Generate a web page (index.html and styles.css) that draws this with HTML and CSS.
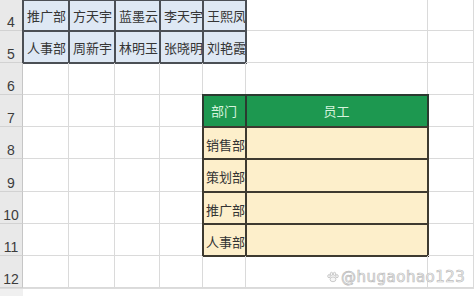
FILE: index.html
```html
<!DOCTYPE html>
<html lang="zh">
<head>
<meta charset="utf-8">
<title>Sheet</title>
<link rel="stylesheet" href="styles.css">
</head>
<body>
<div class="sheet">
  <div class="rh">4</div>
  <div class="c blue">推广部</div><div class="c blue">方天宇</div><div class="c blue">蓝墨云</div><div class="c blue">李天宇</div><div class="c blue">王熙凤</div>
  <div class="c"></div><div class="c"></div>

  <div class="rh">5</div>
  <div class="c blue">人事部</div><div class="c blue">周新宇</div><div class="c blue">林明玉</div><div class="c blue">张晓明</div><div class="c blue">刘艳霞</div>
  <div class="c"></div><div class="c"></div>

  <div class="rh">6</div>
  <div class="c"></div><div class="c"></div><div class="c"></div><div class="c"></div><div class="c"></div><div class="c"></div><div class="c"></div>

  <div class="rh">7</div>
  <div class="c"></div><div class="c"></div><div class="c"></div><div class="c"></div>
  <div class="c gh">部门</div><div class="c gh">员工</div>
  <div class="c"></div>

  <div class="rh">8</div>
  <div class="c"></div><div class="c"></div><div class="c"></div><div class="c"></div>
  <div class="c cream">销售部</div><div class="c cream"></div>
  <div class="c"></div>

  <div class="rh">9</div>
  <div class="c"></div><div class="c"></div><div class="c"></div><div class="c"></div>
  <div class="c cream">策划部</div><div class="c cream"></div>
  <div class="c"></div>

  <div class="rh">10</div>
  <div class="c"></div><div class="c"></div><div class="c"></div><div class="c"></div>
  <div class="c cream">推广部</div><div class="c cream"></div>
  <div class="c"></div>

  <div class="rh">11</div>
  <div class="c"></div><div class="c"></div><div class="c"></div><div class="c"></div>
  <div class="c cream">人事部</div><div class="c cream"></div>
  <div class="c"></div>

  <div class="rh">12</div>
  <div class="c"></div><div class="c"></div><div class="c"></div><div class="c"></div><div class="c"></div><div class="c"></div><div class="c"></div>

  <div class="rh tail"></div>
  <div class="c tail"></div><div class="c tail"></div><div class="c tail"></div><div class="c tail"></div><div class="c tail"></div><div class="c tail"></div><div class="c tail"></div>

  <div class="mark">
    <svg class="paw" width="12" height="12" viewBox="0 0 13 13" aria-hidden="true">
      <g fill="#f6f6f6" stroke="#c0c0c0" stroke-width="0.9">
        <ellipse cx="6.5" cy="9" rx="3.2" ry="2.6"/>
        <ellipse cx="2.2" cy="5.6" rx="1.4" ry="1.7"/>
        <ellipse cx="4.9" cy="3.2" rx="1.4" ry="1.8"/>
        <ellipse cx="8.1" cy="3.2" rx="1.4" ry="1.8"/>
        <ellipse cx="10.8" cy="5.6" rx="1.4" ry="1.7"/>
      </g>
    </svg>
    <span class="mark-text">@hugaohao123</span>
  </div>
</div>
</body>
</html>
```

FILE: styles.css
```css
html, body {
  margin: 0;
  padding: 0;
  background: #ffffff;
  overflow: hidden;
}

.sheet {
  position: relative;
  width: 474px;
  height: 296px;
  display: grid;
  grid-template-columns: 23px 46px 46px 45px 43px 43px 182px 46px;
  grid-template-rows: 31px 32px 32px 32px 32px 33px 32px 32px 32px 8px;
  font-family: "Noto Sans CJK SC", "Noto Sans", sans-serif;
  font-size: 13px;
  color: #333333;
  background: #ffffff;
}

.rh {
  box-sizing: border-box;
  background: #e9e9e9;
  border-right: 1px solid #c6c6c6;
  border-bottom: 1px solid #d2d2d2;
  display: flex;
  align-items: flex-end;
  justify-content: center;
  padding-bottom: 1px;
  font-family: "Liberation Sans", Arial, sans-serif;
  font-size: 14px;
  line-height: 14px;
  color: #3c3c3c;
}

.c {
  box-sizing: border-box;
  border-right: 1px solid #dadada;
  border-bottom: 1px solid #dadada;
  display: flex;
  align-items: center;
  padding: 2px 0 0 4px;
  white-space: nowrap;
  overflow: visible;
  line-height: 16px;
}

.blue {
  background: #dee8f4;
  outline: 2px solid #4b4f55;
  outline-offset: -1px;
  color: #353535;
}

.gh {
  background: #1d9850;
  outline: 2px solid #2b3a30;
  outline-offset: -1px;
  color: #d6f3de;
  justify-content: center;
  padding: 0;
  font-size: 13px;
}

.cream {
  background: #fdefcb;
  outline: 2px solid #3e3a30;
  outline-offset: -1px;
  padding-left: 3px;
  padding-top: 4px;
  color: #333333;
}

.tail {
  border-bottom: none;
  border-right: none;
  border-top: 1px solid #dcdcdc;
  background: #ffffff;
}

.rh.tail {
  background: #f0f0f0;
}

.mark {
  position: absolute;
  left: 327px;
  top: 268px;
  display: flex;
  align-items: center;
  gap: 2px;
}

.mark-text {
  font-family: "DejaVu Sans", sans-serif;
  font-size: 15px;
  line-height: 18px;
  color: #f6f6f6;
  -webkit-text-stroke: 0.7px #bdbdbd;
  letter-spacing: 0.5px;
}
```
